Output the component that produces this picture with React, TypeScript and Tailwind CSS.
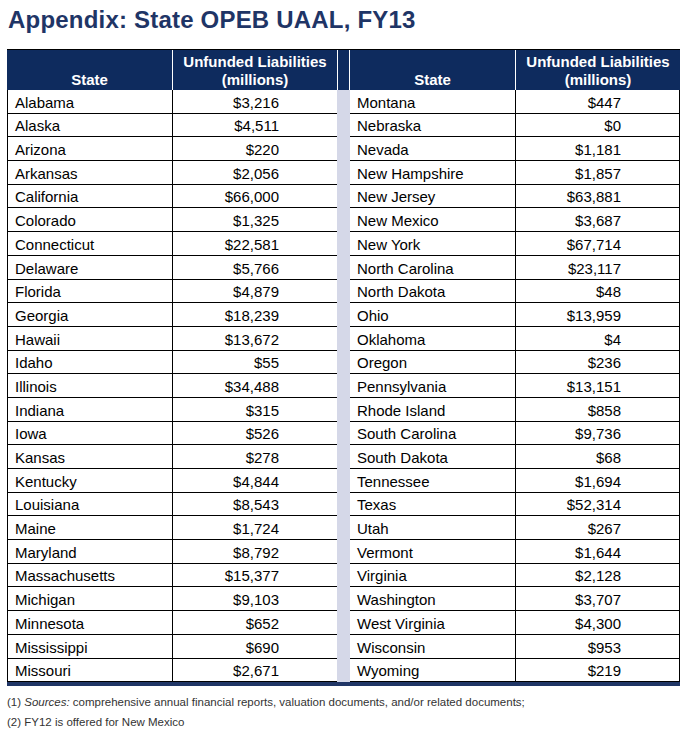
import React from "react"

const left: [string, string][] = [
  ["Alabama", "$3,216"],
  ["Alaska", "$4,511"],
  ["Arizona", "$220"],
  ["Arkansas", "$2,056"],
  ["California", "$66,000"],
  ["Colorado", "$1,325"],
  ["Connecticut", "$22,581"],
  ["Delaware", "$5,766"],
  ["Florida", "$4,879"],
  ["Georgia", "$18,239"],
  ["Hawaii", "$13,672"],
  ["Idaho", "$55"],
  ["Illinois", "$34,488"],
  ["Indiana", "$315"],
  ["Iowa", "$526"],
  ["Kansas", "$278"],
  ["Kentucky", "$4,844"],
  ["Louisiana", "$8,543"],
  ["Maine", "$1,724"],
  ["Maryland", "$8,792"],
  ["Massachusetts", "$15,377"],
  ["Michigan", "$9,103"],
  ["Minnesota", "$652"],
  ["Mississippi", "$690"],
  ["Missouri", "$2,671"],
]

const right: [string, string][] = [
  ["Montana", "$447"],
  ["Nebraska", "$0"],
  ["Nevada", "$1,181"],
  ["New Hampshire", "$1,857"],
  ["New Jersey", "$63,881"],
  ["New Mexico", "$3,687"],
  ["New York", "$67,714"],
  ["North Carolina", "$23,117"],
  ["North Dakota", "$48"],
  ["Ohio", "$13,959"],
  ["Oklahoma", "$4"],
  ["Oregon", "$236"],
  ["Pennsylvania", "$13,151"],
  ["Rhode Island", "$858"],
  ["South Carolina", "$9,736"],
  ["South Dakota", "$68"],
  ["Tennessee", "$1,694"],
  ["Texas", "$52,314"],
  ["Utah", "$267"],
  ["Vermont", "$1,644"],
  ["Virginia", "$2,128"],
  ["Washington", "$3,707"],
  ["West Virginia", "$4,300"],
  ["Wisconsin", "$953"],
  ["Wyoming", "$219"],
]

function HeaderHalf() {
  return (
    <>
      <div className="w-[165px] flex items-end justify-center pb-[1px] leading-[18px]">State</div>
      <div className="w-[165px] border-l border-white flex flex-col items-center justify-end pb-[1px] leading-[18px]">
        <span>Unfunded Liabilities</span>
        <span>(millions)</span>
      </div>
    </>
  )
}

export default function App() {
  return (
    <div className="w-[687px] h-[738px] bg-white font-['Liberation_Sans',Arial,sans-serif] text-black">
      <h1 className="pl-[8px] pt-[5px] h-[49px] text-[24px] leading-[30px] font-bold text-[#1f3566] tracking-[0.2px]">
        Appendix: State OPEB UAAL, FY13
      </h1>

      <div className="ml-[7px] w-[673px]">
        {/* header */}
        <div className="flex h-[41px] bg-[#0e2b5e] border-t border-black text-white font-bold text-[15px]">
          <HeaderHalf />
          <div className="w-[13px] border-l border-r border-white" />
          <HeaderHalf />
        </div>

        {/* body */}
        <div className="flex flex-col h-[592px] text-[15px] leading-[18px]">
          {left.map((l, i) => {
            const r = right[i]
            return (
              <div key={l[0]} className="flex flex-1">
                <div className="w-[165px] border-l border-b border-black pl-[7px] pb-[1px] flex items-end">{l[0]}</div>
                <div className="w-[165px] border-l border-b border-black pr-[58px] pb-[1px] flex items-end justify-end">{l[1]}</div>
                <div className="w-[13px] bg-[#d5d8e8]" />
                <div className="w-[165px] border-b border-black pl-[7px] pb-[1px] flex items-end">{r[0]}</div>
                <div className="w-[165px] border-l border-r border-b border-black pr-[58px] pb-[1px] flex items-end justify-end">{r[1]}</div>
              </div>
            )
          })}
        </div>
        <div className="h-[4px] bg-[#203666]" />
      </div>

      <div className="pl-[7px] pt-[6px] text-[11.5px] text-[#333] leading-[20px]">
        <p>
          (1) <i>Sources:</i> comprehensive annual financial reports, valuation documents, and/or related documents;
        </p>
        <p>(2) FY12 is offered for New Mexico</p>
      </div>
    </div>
  )
}
